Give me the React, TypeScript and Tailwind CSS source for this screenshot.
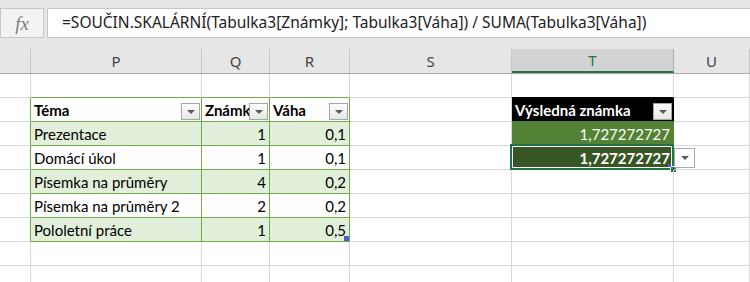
import React from "react";

const GRID = "grid grid-cols-[31px_171px_68px_80px_162px_162px_1fr]";
const CELLFONT = "font-['Lato','Open_Sans',sans-serif] text-[15px]";

function Tri() {
  return (
    <div className="w-0 h-0 border-l-[4px] border-r-[4px] border-t-[4px] border-l-transparent border-r-transparent border-t-[#5a5a5a]" />
  );
}

function Filter() {
  return (
    <div className="shrink-0 w-[19px] h-[17px] mb-[1px] mr-[1px] self-end border border-[#a6a6a6] bg-gradient-to-b from-white to-[#e6e6e6] flex items-center justify-center">
      <Tri />
    </div>
  );
}

type C = {
  text?: string;
  cls?: string;
  right?: boolean;
  filter?: boolean;
  extra?: React.ReactNode;
};

function Cell({ c }: { c: C }) {
  return (
    <div
      className={`relative h-[24px] border-r border-b flex items-center ${CELLFONT} ${c.cls ?? "border-[#d9d9d9]"}`}
    >
      {c.text !== undefined && (
        <span
          className={`flex-1 min-w-0 overflow-hidden whitespace-nowrap leading-[22px] ${c.right ? "text-right pr-[3px]" : "pl-[3px]"}`}
        >
          {c.text}
        </span>
      )}
      {c.filter && <Filter />}
      {c.extra}
    </div>
  );
}

const G = "border-[#d9d9d9]";
const GR = "border-r-[#70ad47] border-b-[#70ad47]";
const band = "bg-[#e2efda]";

export default function App() {
  const empty: C = { cls: G };
  const rows: C[][] = [
    [
      empty,
      { cls: "border-r-[#d9d9d9] border-b-[#70ad47]" },
      { cls: "border-r-[#d9d9d9] border-b-[#70ad47]" },
      { cls: "border-r-[#d9d9d9] border-b-[#70ad47]" },
      empty,
      { cls: "border-r-[#d9d9d9] border-b-black" },
      empty,
    ],
    [
      { cls: "border-r-[#70ad47] border-b-[#d9d9d9]" },
      { text: "Téma", filter: true, cls: `${GR} bg-white font-bold text-black` },
      { text: "Známky", filter: true, cls: `${GR} bg-white font-bold text-black` },
      { text: "Váha", filter: true, cls: `${GR} bg-white font-bold text-black` },
      empty,
      {
        text: "Výsledná známka",
        filter: true,
        cls: "border-r-black border-b-[#548235] bg-black font-bold text-white",
      },
      empty,
    ],
    ...[
      ["Prezentace", "1", "0,1"],
      ["Domácí úkol", "1", "0,1"],
      ["Písemka na průměry", "4", "0,2"],
      ["Písemka na průměry 2", "2", "0,2"],
      ["Pololetní práce", "1", "0,5"],
    ].map((r, i): C[] => {
      const bg = i % 2 === 0 ? band : "bg-white";
      const last = i === 4;
      let t: C = empty;
      if (i === 0)
        t = {
          text: "1,727272727",
          right: true,
          cls: "border-r-[#548235] border-b-[#548235] bg-[#548235] text-white",
        };
      if (i === 1)
        t = {
          text: "1,727272727",
          right: true,
          cls: "border-r-[#d9d9d9] border-b-[#d9d9d9] bg-[#375623] text-white font-bold",
          extra: (
            <>
              <div className="absolute -left-[2px] -top-[2px] -right-[1px] -bottom-[1px] border-2 border-[#217346] pointer-events-none">
                <div className="absolute inset-0 border border-white" />
              </div>
              <div className="absolute -right-[4px] -bottom-[4px] w-[7px] h-[7px] bg-[#217346] border border-white" />
              <div className="absolute right-[2px] bottom-[2px] w-[3px] h-[3px] bg-[#4f5bd5]" />
              <div className="absolute left-[calc(100%+1px)] top-[2px] w-[21px] h-[20px] border border-[#ababab] bg-white flex items-center justify-center">
                <Tri />
              </div>
            </>
          ),
        };
      return [
        { cls: "border-r-[#70ad47] border-b-[#d9d9d9]" },
        { text: r[0], cls: `${GR} ${bg} text-black` },
        { text: r[1], right: true, cls: `${GR} ${bg} text-black` },
        {
          text: r[2],
          right: true,
          cls: `${GR} ${bg} text-black`,
          extra: last ? (
            <div className="absolute right-0 bottom-0 w-[5px] h-[5px] bg-[#4f5bd5]" />
          ) : undefined,
        },
        empty,
        t,
        empty,
      ];
    }),
    [empty, empty, empty, empty, empty, empty, empty],
    [empty, empty, empty, empty, empty, empty, empty],
  ];

  const headers = ["", "P", "Q", "R", "S", "T", "U"];

  return (
    <div className="w-[750px] h-[282px] overflow-hidden bg-white">
      <div className="h-[49px] bg-[#e6e6e6] pt-[8px] flex gap-[3px]">
        <div className="w-[44px] h-[30px] border border-[#c6c6c6] bg-[#f3f3f3] flex items-center justify-center">
          <span className="font-['Liberation_Serif',serif] italic text-[19px] text-[#7a7a7a] leading-none">
            fx
          </span>
        </div>
        <div className="flex-1 h-[30px] border border-r-0 border-[#c6c6c6] bg-white flex items-center pl-[14px]">
          <span className="font-['Noto_Sans',sans-serif] text-[15.5px] text-[#222] whitespace-nowrap">
            =SOUČIN.SKALÁRNÍ(Tabulka3[Známky]; Tabulka3[Váha]) / SUMA(Tabulka3[Váha])
          </span>
        </div>
      </div>
      <div className={`${GRID} bg-[#e6e6e6] border-b border-[#ababab]`}>
        {headers.map((h, i) => (
          <div
            key={i}
            className={`h-[24px] flex items-center justify-center font-['Noto_Sans',sans-serif] text-[15px] ${
              h === "T"
                ? "bg-[#d2d2d2] text-[#217346] border-b-2 border-[#217346] border-r border-r-[#ababab]"
                : "text-[#444] border-r border-[#c6c6c6]"
            }`}
          >
            {h}
          </div>
        ))}
      </div>
      <div className={GRID}>
        {rows.map((r, ri) =>
          r.map((c, ci) => <Cell key={`${ri}-${ci}`} c={c} />)
        )}
      </div>
    </div>
  );
}
